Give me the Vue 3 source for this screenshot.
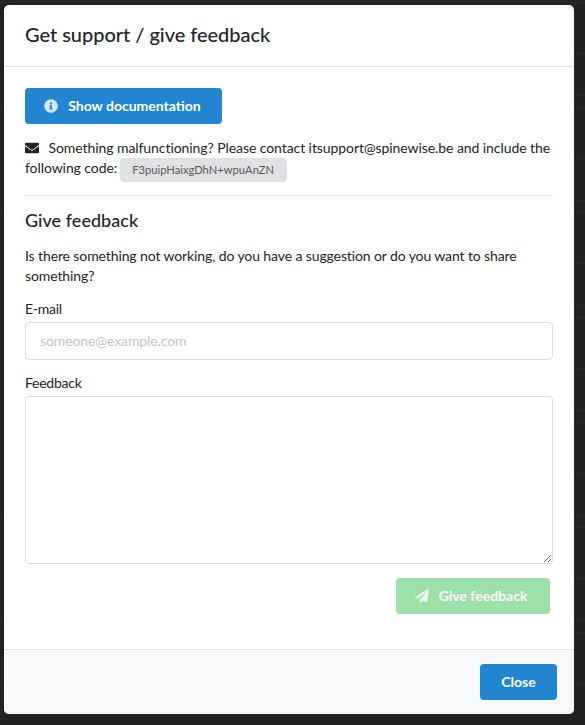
<script setup>
const code = 'F3puipHaixgDhN+wpuAnZN'
</script>

<template>
  <div class="page">
    <div class="modal">
      <header class="head"><h1>Get support / give feedback</h1></header>
      <main class="body">
        <button class="btn blue doc" type="button">
          <svg class="ico" viewBox="0 0 512 512"><path fill="currentColor" d="M256 8C119 8 8 119 8 256s111 248 248 248 248-111 248-248S393 8 256 8zm0 110c23 0 42 19 42 42s-19 42-42 42-42-19-42-42 19-42 42-42zm56 254c0 7-5 12-12 12h-88c-7 0-12-5-12-12v-24c0-7 5-12 12-12h12v-64h-12c-7 0-12-5-12-12v-24c0-7 5-12 12-12h64c7 0 12 5 12 12v100h12c7 0 12 5 12 12v24z"/></svg>
          <span>Show documentation</span>
        </button>
        <p class="contact">
          <svg class="mail" viewBox="0 0 512 512"><path fill="currentColor" d="M502 191c4-3 10 0 10 5v204c0 26-22 48-48 48H48c-26 0-48-22-48-48V196c0-5 6-8 10-5 22 17 52 39 154 113 21 15 57 48 92 48s72-33 92-48c102-74 132-96 154-113zM256 320c23 0 57-29 73-41 133-97 143-105 174-129 6-5 9-12 9-19v-19c0-26-22-48-48-48H48C22 64 0 86 0 112v19c0 7 3 14 9 19 31 24 41 32 174 129 16 12 50 41 73 41z"/></svg>
          Something malfunctioning? Please contact itsupport@spinewise.be and include the following code:
          <span class="code">{{ code }}</span>
        </p>
        <hr class="rule" />
        <h2>Give feedback</h2>
        <p class="intro">Is there something not working, do you have a suggestion or do you want to share something?</p>
        <label class="lab" for="mail">E-mail</label>
        <input id="mail" class="field" type="text" placeholder="someone@example.com" />
        <label class="lab" for="fb">Feedback</label>
        <textarea id="fb" class="field area"></textarea>
        <div class="send">
          <button class="btn green" type="button">
            <svg class="ico" viewBox="0 0 512 512"><path fill="currentColor" d="M476 3L13 270c-18 10-16 35 2 43l106 44 287-253c5-5 13 2 8 8L176 405v84c0 24 29 33 43 16l63-77 125 52c14 6 30-3 33-18L512 28c4-20-18-35-36-25z"/></svg>
            <span>Give feedback</span>
          </button>
        </div>
      </main>
      <footer class="foot"><button class="btn blue close" type="button">Close</button></footer>
    </div>
  </div>
</template>

<style>
html, body { margin: 0; background: #222; }
</style>

<style scoped>
.page {
  box-sizing: border-box;
  width: 585px;
  height: 725px;
  padding: 5px 11px 11px 4px;
  background-color: #222;
  background-image: linear-gradient(
    #2c2c2c 0, #2c2c2c 1px,
    transparent 1px, transparent 12px,
    #2c2c2c 12px, #2c2c2c 13px,
    transparent 13px, transparent 63px,
    #2c2c2c 63px, #2c2c2c 64px,
    transparent 64px
  );
  background-size: 100% 105px;
  background-position: 0 95px;
  font-family: Lato, "Liberation Sans", sans-serif;
  font-size: 14px;
  line-height: 20px;
  color: #212529;
  overflow: hidden;
}
.modal {
  height: 709px;
  display: flex;
  flex-direction: column;
  background: #fff;
  border-radius: 5px;
  overflow: hidden;
}
.head {
  flex: none;
  box-sizing: border-box;
  height: 62px;
  padding: 0 21px 3px;
  display: flex;
  align-items: center;
  border-bottom: 1px solid #dee2e6;
}
h1 { margin: 0; font-size: 20px; font-weight: 500; line-height: 28px; letter-spacing: -0.03px; }
.body { flex: 1; padding: 21px 21px 0; display: flex; flex-direction: column; align-items: stretch; }
.btn {
  font-family: inherit;
  border: 0;
  border-radius: 4px;
  color: #fff;
  font-size: 14px;
  font-weight: 700;
  line-height: 20px;
  height: 36px;
  display: inline-flex;
  align-items: center;
  justify-content: center;
  padding: 0;
}
.blue { background: #2185d0; }
.green { background: #9ee0a9; width: 154px; color: rgba(255, 255, 255, 0.95); padding-right: 4px; }
.doc { width: 197px; padding-right: 2px; }
.ico { width: 14px; height: 14px; margin-right: 10px; opacity: 0.8; flex: none; }
.contact { margin: 14px 0 0; letter-spacing: -0.075px; }
.mail { width: 14px; height: 14px; margin-right: 6px; vertical-align: -2px; color: #212529; }
.code {
  display: inline-block;
  background: #e0e1e2;
  color: #5a5a5a;
  font-size: 11.2px;
  letter-spacing: 0;
  line-height: 24px;
  height: 24px;
  padding: 0 12.5px;
  border-radius: 4px;
  vertical-align: top;
  margin-left: -1px;
}
.rule { width: 100%; margin: 13px 0 0; border: 0; border-top: 1px solid #dee2e6; }
h2 { margin: 13px 0 0; font-size: 18px; font-weight: 500; line-height: 22px; letter-spacing: 0.03px; }
.intro { margin: 15px 0 0; letter-spacing: -0.11px; }
.lab { display: block; margin-top: 13px; letter-spacing: -0.25px; }
.field {
  display: block;
  box-sizing: border-box;
  width: 100%;
  height: 38px;
  margin: 3px 0 0;
  padding: 0 14px 1px;
  border: 1px solid #dedede;
  border-radius: 4px;
  background: #fff;
  font-family: inherit;
  font-size: 14px;
  letter-spacing: -0.1px;
  outline: none;
}
.field::placeholder { color: #c4c4c4; }
.area { height: 168px; }
.send { display: flex; justify-content: flex-end; margin-top: 14px; padding-right: 3px; }
.foot {
  flex: none;
  box-sizing: border-box;
  height: 65px;
  padding: 14px 17px 14px 0;
  display: flex;
  justify-content: flex-end;
  background: #f8f9fb;
  border-top: 1px solid #dee2e6;
}
.close { width: 77px; }
</style>
